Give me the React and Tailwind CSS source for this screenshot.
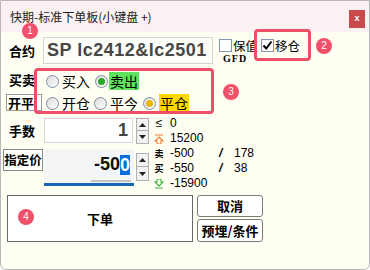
import React from "react";

const CJK = { fontFamily: '"Noto Sans CJK SC", "Noto Sans", sans-serif' };

function Radio({ checked, dot }) {
  return (
    <span className="w-[13px] h-[13px] rounded-full border border-[#7d8ea3] bg-linear-to-br from-[#dcdcdc] to-white flex items-center justify-center shrink-0">
      {checked ? <span className={`w-[7px] h-[7px] rounded-full ${dot}`} /> : null}
    </span>
  );
}

function Spin({ h }) {
  return (
    <div className="flex flex-col">
      <div className={`w-[13px] ${h} border border-[#b0b0b0] bg-[#f2f2f2] flex items-center justify-center`}>
        <svg width="7" height="4" viewBox="0 0 7 4"><path d="M3.5 0 L7 4 L0 4 Z" fill="#222" /></svg>
      </div>
      <div className={`w-[13px] ${h} border border-t-0 border-[#b0b0b0] bg-[#f2f2f2] flex items-center justify-center`}>
        <svg width="7" height="4" viewBox="0 0 7 4"><path d="M0 0 L7 0 L3.5 4 Z" fill="#222" /></svg>
      </div>
    </div>
  );
}

function Badge({ n, className }) {
  return (
    <div className={`absolute w-[16px] h-[16px] rounded-full bg-[#f0506a] text-white text-[10px] leading-none flex items-center justify-center ${className}`} style={{ fontFamily: '"Liberation Sans", sans-serif' }}>
      {n}
    </div>
  );
}

export default function App() {
  return (
    <div className="relative w-[370px] h-[270px] overflow-hidden bg-[#fefef3] border border-[#b8b8b8] rounded-b-[6px] text-black" style={CJK}>
      {/* title bar */}
      <div className="h-[31px] bg-[#fbf0f2] flex items-start">
        <div className="pl-[9px] pt-[7px] text-[12px] leading-[18px] text-[#222]">快期-标准下单板(小键盘 +)</div>
        <div className="ml-auto mr-[4px] mt-[9px] w-[16px] h-[18px] bg-[#c94a4c] text-white text-[9px] font-bold flex items-center justify-center" style={{ fontFamily: '"Liberation Sans", sans-serif' }}>x</div>
      </div>

      {/* row 1 */}
      <div className="mt-[5px] h-[27px] flex">
        <div className="w-[42px] pl-[8px] flex items-center text-[13px] font-bold">合约</div>
        <div className="w-[170px] h-[27px] border border-[#d4d4d4] bg-[#fefef8] flex items-center pl-[3px] text-[18px] font-bold text-[#474747] tracking-[0.5px]" style={{ fontFamily: '"Liberation Sans", sans-serif' }}>
          SP lc2412&amp;lc2501
        </div>
        <div className="ml-[6px] flex flex-col">
          <div className="mt-[2px] h-[13px] flex items-center">
            <span className="w-[13px] h-[13px] border border-[#8296ad] bg-white" />
            <span className="ml-[1px] text-[12.5px] leading-[13px]">保值</span>
          </div>
          <div className="pl-[4px] mt-[2px] text-[10px] leading-[9px] font-bold tracking-[1px]" style={{ fontFamily: '"Liberation Serif", serif' }}>GFD</div>
        </div>
        <div className="ml-[3px] mt-[2px] h-[13px] flex items-center">
          <span className="w-[13px] h-[13px] border border-[#8296ad] bg-white flex items-center justify-center">
            <svg width="11" height="11" viewBox="0 0 11 11"><path d="M1.5 5.5 L4.2 8.5 L9.5 1.5" stroke="#000" strokeWidth="2" fill="none" /></svg>
          </span>
          <span className="ml-[1px] text-[12.5px] leading-[13px]">移仓</span>
        </div>
      </div>

      {/* row 2 */}
      <div className="mt-[4px] h-[46px] flex">
        <div className="w-[45px] flex flex-col">
          <div className="pl-[8px] mt-[3px] text-[13px] font-bold leading-[18px]">买卖</div>
          <div className="ml-[5px] mt-[5px] w-[36px] h-[17px] border border-[#9a9a9a] bg-white text-[13px] font-bold leading-[15px] pl-[1px]">开平</div>
        </div>
        <div className="flex flex-col text-[14px] leading-[18px]">
          <div className="mt-[4px] flex items-center">
            <Radio />
            <span className="ml-[3px]">买入</span>
            <span className="ml-[5px]"><Radio checked dot="bg-[#27a827]" /></span>
            <span className="ml-[1px] px-[1px] bg-[#5fe35f]">卖出</span>
          </div>
          <div className="mt-[4px] flex items-center">
            <Radio />
            <span className="ml-[3px]">开仓</span>
            <span className="ml-[4px]"><Radio /></span>
            <span className="ml-[3px]">平今</span>
            <span className="ml-[5px]"><Radio checked dot="bg-[#e8b800]" /></span>
            <span className="ml-[3px] px-[1px] bg-[#ffd800]">平仓</span>
          </div>
        </div>
      </div>

      {/* rows 3-4 + info */}
      <div className="mt-[2px] flex">
        <div className="w-[153px] flex flex-col">
          <div className="mt-[2px] h-[25px] flex">
            <div className="w-[43px] pl-[8px] flex items-center text-[13px] font-bold">手数</div>
            <div className="w-[89px] h-[25px] border border-[#d8d8d8] bg-white flex items-center justify-end pr-[4px] text-[18px] font-bold text-[#444]" style={{ fontFamily: '"Liberation Sans", sans-serif' }}>1</div>
            <div className="ml-[3px]"><Spin h="h-[13px]" /></div>
          </div>
          <div className="mt-[6px] h-[37px] flex">
            <div className="ml-[2px] w-[40px] h-[22px] border border-[#8a8a8a] bg-white flex items-center justify-center text-[12.5px] font-bold">指定价</div>
            <div className="ml-[1px] w-[90px] h-[37px] bg-[#f3f5f7] border-b-[3px] border-[#1565b8] flex flex-col">
              <div className="h-[31px] flex items-center justify-end pr-[4px] text-[18px] font-bold text-[#111]" style={{ fontFamily: '"Liberation Sans", sans-serif' }}>
                -50<span className="bg-[#0a6fd6] text-white leading-[20px]">0</span>
              </div>
              <div className="ml-[47px] w-[40px] h-[2px] bg-[#c4c4c4]" />
            </div>
            <div className="ml-[2px] mt-[4px]"><Spin h="h-[14px]" /></div>
          </div>
        </div>
        <div className="flex flex-col text-[12px] leading-[15px]" style={{ fontFamily: '"Liberation Sans", sans-serif' }}>
          {[
            { icon: <span className="text-[12px]">≤</span>, a: "0" },
            {
              icon: (
                <svg width="10" height="10" viewBox="0 0 10 10"><path d="M1 1 H9" stroke="#f07a2a" strokeWidth="1.2" /><path d="M5 3 L9 7 H7 V10 H3 V7 H1 Z" fill="none" stroke="#f07a2a" strokeWidth="1.1" /></svg>
              ),
              a: "15200",
            },
            { icon: <span className="text-[9px] font-bold" style={CJK}>卖</span>, a: "-500", b: "178" },
            { icon: <span className="text-[9px] font-bold" style={CJK}>买</span>, a: "-550", b: "38" },
            {
              icon: (
                <svg width="10" height="10" viewBox="0 0 10 10"><path d="M5 7 L9 3 H7 V0 H3 V3 H1 Z" fill="none" stroke="#3cae3c" strokeWidth="1.1" /><path d="M1 9 H9" stroke="#3cae3c" strokeWidth="1.2" /></svg>
              ),
              a: "-15900",
            },
          ].map((r, i) => (
            <div key={i} className="h-[15px] flex items-center">
              <div className="w-[10px] flex items-center justify-center">{r.icon}</div>
              <div className="ml-[6px] w-[49px]">{r.a}</div>
              {r.b ? (
                <>
                  <div className="w-[15px] font-bold italic">/</div>
                  <div>{r.b}</div>
                </>
              ) : null}
            </div>
          ))}
        </div>
      </div>

      {/* row 5 */}
      <div className="mt-[4px] flex">
        <div className="ml-[6px] w-[186px] h-[47px] border border-[#6a6a6a] bg-white flex items-center justify-center text-[13px] font-bold">下单</div>
        <div className="ml-[4px] w-[66px] flex flex-col">
          <div className="h-[22px] border border-[#7a7a7a] rounded-[3px] bg-white flex items-center justify-center text-[13px] font-bold">取消</div>
          <div className="mt-[2px] h-[23px] border border-[#7a7a7a] rounded-[3px] bg-white flex items-center justify-center text-[13px] font-bold">预埋/条件</div>
        </div>
      </div>

      {/* annotations */}
      <div className="absolute left-[253px] top-[28px] w-[57px] h-[32px] border-[3px] border-[#ef4f66] rounded-[4px]" />
      <div className="absolute left-[33px] top-[67px] w-[180px] h-[46px] border-[3px] border-[#ef4f66] rounded-[4px]" />
      <Badge n="1" className="left-[21px] top-[22px]" />
      <Badge n="2" className="left-[315px] top-[37px]" />
      <Badge n="3" className="left-[222px] top-[83px]" />
      <Badge n="4" className="left-[17px] top-[208px]" />
    </div>
  );
}
